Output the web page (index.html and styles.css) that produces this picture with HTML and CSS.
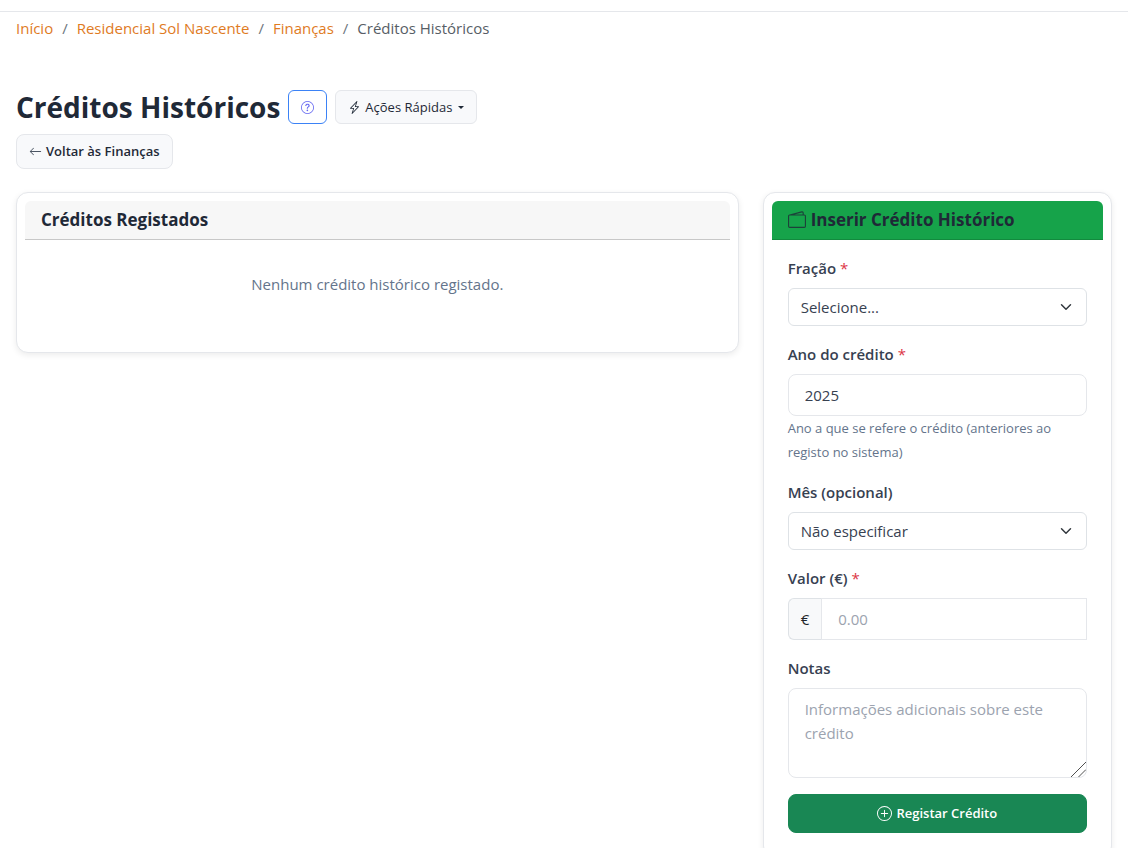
FILE: index.html
```html
<!DOCTYPE html>
<html lang="pt">
<head>
    <meta charset="UTF-8">
    <meta name="viewport" content="width=device-width, initial-scale=1.0">
    <title>Créditos Históricos</title>
    <link rel="stylesheet" href="styles.css">
</head>
<body>
    <header class="topbar"></header>

    <main class="container">
        <nav aria-label="breadcrumb">
            <ol class="breadcrumb">
                <li><a href="#">Início</a></li>
                <li><a href="#">Residencial Sol Nascente</a></li>
                <li><a href="#">Finanças</a></li>
                <li aria-current="page">Créditos Históricos</li>
            </ol>
        </nav>

        <div class="page-header">
            <div class="page-title">
                <h1>Créditos Históricos</h1>
                <button type="button" class="btn btn-help" aria-label="Ajuda">
                    <svg class="icon" viewBox="0 0 16 16" fill="currentColor">
                        <path d="M8 15A7 7 0 1 1 8 1a7 7 0 0 1 0 14m0 1A8 8 0 1 0 8 0a8 8 0 0 0 0 16"/>
                        <path d="M5.255 5.786a.237.237 0 0 0 .241.247h.825c.138 0 .248-.113.266-.25.09-.656.54-1.134 1.342-1.134.686 0 1.314.343 1.314 1.168 0 .635-.374.927-.965 1.371-.673.489-1.206 1.06-1.168 1.987l.003.217a.25.25 0 0 0 .25.246h.811a.25.25 0 0 0 .25-.25v-.105c0-.718.273-.927 1.01-1.486.609-.463 1.244-.977 1.244-2.056 0-1.511-1.276-2.241-2.673-2.241-1.267 0-2.655.59-2.75 2.286m1.557 5.763c0 .533.425.927 1.01.927.609 0 1.028-.394 1.028-.927 0-.552-.42-.94-1.029-.94-.584 0-1.009.388-1.009.94"/>
                    </svg>
                </button>
                <button type="button" class="btn btn-light" aria-haspopup="true">
                    <svg class="icon" viewBox="0 0 16 16" fill="currentColor">
                        <path d="M11.251.068a.5.5 0 0 1 .227.58L9.677 6.5H13a.5.5 0 0 1 .364.843l-8 8.5a.5.5 0 0 1-.842-.49L6.323 9.5H3a.5.5 0 0 1-.364-.843l8-8.5a.5.5 0 0 1 .615-.09zM4.157 8.5H7a.5.5 0 0 1 .478.647L6.11 13.59l5.732-6.09H9a.5.5 0 0 1-.478-.647L9.89 2.41z"/>
                    </svg>
                    <span>Ações Rápidas</span>
                    <span class="caret"></span>
                </button>
            </div>
            <a href="#" class="btn btn-light btn-back">
                <svg class="icon" viewBox="0 0 16 16" fill="currentColor">
                    <path fill-rule="evenodd" d="M15 8a.5.5 0 0 0-.5-.5H2.707l3.147-3.146a.5.5 0 1 0-.708-.708l-4 4a.5.5 0 0 0 0 .708l4 4a.5.5 0 0 0 .708-.708L2.707 8.5H14.5A.5.5 0 0 0 15 8"/>
                </svg>
                <span>Voltar às Finanças</span>
            </a>
        </div>

        <div class="row">
            <section class="card col-list">
                <div class="card-header">
                    <h2>Créditos Registados</h2>
                </div>
                <div class="empty-state">
                    <p>Nenhum crédito histórico registado.</p>
                </div>
            </section>

            <section class="card col-form">
                <div class="card-header card-header-success">
                    <svg class="icon icon-wallet" viewBox="0 0 16 16" fill="currentColor">
                        <path d="M12.136.326A1.5 1.5 0 0 1 14 1.78V3h.5A1.5 1.5 0 0 1 16 4.5v9a1.5 1.5 0 0 1-1.5 1.5h-13A1.5 1.5 0 0 1 0 13.5v-9a1.5 1.5 0 0 1 1.432-1.499zM5.562 3H13V1.78a.5.5 0 0 0-.621-.484zM1.5 4a.5.5 0 0 0-.5.5v9a.5.5 0 0 0 .5.5h13a.5.5 0 0 0 .5-.5v-9a.5.5 0 0 0-.5-.5z"/>
                    </svg>
                    <h2>Inserir Crédito Histórico</h2>
                </div>
                <form class="card-body">
                    <div class="field">
                        <label for="fracao">Fração <span class="required">*</span></label>
                        <select id="fracao" class="form-select">
                            <option>Selecione...</option>
                        </select>
                    </div>
                    <div class="field">
                        <label for="ano">Ano do crédito <span class="required">*</span></label>
                        <input type="text" inputmode="numeric" id="ano" class="form-control" value="2025">
                        <small class="form-text">Ano a que se refere o crédito (anteriores ao registo no sistema)</small>
                    </div>
                    <div class="field">
                        <label for="mes">Mês (opcional)</label>
                        <select id="mes" class="form-select">
                            <option>Não especificar</option>
                        </select>
                    </div>
                    <div class="field">
                        <label for="valor">Valor (€) <span class="required">*</span></label>
                        <div class="input-group">
                            <span class="input-group-text">€</span>
                            <input type="text" inputmode="decimal" id="valor" class="form-control" placeholder="0.00">
                        </div>
                    </div>
                    <div class="field">
                        <label for="notas">Notas</label>
                        <textarea id="notas" class="form-control" placeholder="Informações adicionais sobre este crédito"></textarea>
                    </div>
                    <button type="submit" class="btn btn-success">
                        <svg class="icon" viewBox="0 0 16 16" fill="currentColor">
                            <path d="M8 15A7 7 0 1 1 8 1a7 7 0 0 1 0 14m0 1A8 8 0 1 0 8 0a8 8 0 0 0 0 16"/>
                            <path d="M8 4a.5.5 0 0 1 .5.5v3h3a.5.5 0 0 1 0 1h-3v3a.5.5 0 0 1-1 0v-3h-3a.5.5 0 0 1 0-1h3v-3A.5.5 0 0 1 8 4"/>
                        </svg>
                        <span>Registar Crédito</span>
                    </button>
                </form>
            </section>
        </div>
    </main>
</body>
</html>
```
FILE: styles.css
```css
* {
    margin: 0;
    padding: 0;
    box-sizing: border-box;
}

body {
    font-family: 'Segoe UI', 'Open Sans', 'Noto Sans', sans-serif;
    font-size: 15px;
    line-height: 24px;
    color: #212529;
    background: #fff;
}

.topbar {
    height: 12px;
    border-bottom: 1px solid #e5e7eb;
}

.container {
    padding: 4px 16px 24px;
}

.icon {
    width: 1em;
    height: 1em;
    flex-shrink: 0;
}

/* Breadcrumb */
.breadcrumb {
    display: flex;
    flex-wrap: wrap;
    list-style: none;
    color: #575e66;
}

.breadcrumb li + li::before {
    content: '/';
    padding: 0 9px;
    color: #6c757d;
}

.breadcrumb a {
    color: #e07b1f;
    text-decoration: none;
}

/* Page header */
.page-header {
    display: flex;
    flex-direction: column;
    align-items: flex-start;
    gap: 10px;
    margin: 50px 0 23px;
}

.page-title {
    display: flex;
    flex-wrap: wrap;
    align-items: center;
    gap: 8px;
}

h1 {
    font-size: 28px;
    line-height: 34px;
    font-weight: 700;
    color: #1f2937;
}

/* Buttons */
.btn {
    display: inline-flex;
    align-items: center;
    justify-content: center;
    gap: 4px;
    padding: 5px 12px;
    border: 1px solid #e5e7eb;
    border-radius: 6px;
    font-family: inherit;
    font-size: 13px;
    line-height: 22px;
    font-weight: 500;
    text-decoration: none;
    cursor: pointer;
}

.btn-light {
    background: #f8f9fb;
    color: #1f2937;
}

.btn-back {
    padding: 6px 12px;
    border-radius: 8px;
    line-height: 21px;
    font-weight: 600;
}

.btn-back .icon {
    color: #4b5563;
}

.btn-help {
    align-self: stretch;
    background: #fff;
    border-color: #3b82f6;
    color: #6366f1;
}

.btn-success {
    width: 100%;
    padding: 8px 12px;
    border-color: #198754;
    border-radius: 8px;
    background: #198754;
    color: #fff;
    line-height: 21px;
    font-weight: 600;
}

.btn-success .icon {
    width: 15px;
    height: 15px;
}

.caret {
    margin-left: 2px;
    border-top: 3px solid;
    border-left: 3px solid transparent;
    border-right: 3px solid transparent;
}

/* Cards */
.row {
    display: grid;
    grid-template-columns: repeat(12, 1fr);
    gap: 24px;
    align-items: start;
}

.col-list {
    grid-column: span 8;
}

.col-form {
    grid-column: span 4;
}

.card {
    padding: 8px;
    border: 1px solid #e5e7eb;
    border-radius: 12px;
    background: #fff;
    box-shadow: 0 2px 6px rgba(0, 0, 0, 0.08);
}

.card-header {
    display: flex;
    align-items: center;
    gap: 5px;
    padding: 8px 16px;
    border-bottom: 1px solid #c8c8c8;
    border-radius: 6px 6px 0 0;
    background: #f7f7f7;
}

.card-header h2 {
    font-size: 17px;
    line-height: 22px;
    font-weight: 700;
    color: #1f2937;
}

.card-header-success {
    background: #16a34a;
    border-color: #128a3e;
    color: #1f2937;
}

.icon-wallet {
    width: 18px;
    height: 18px;
    opacity: 0.8;
}

.empty-state {
    padding: 32px 16px 48px;
    text-align: center;
    color: #64748b;
}

.card-body {
    padding: 16px;
}

/* Form */
.field {
    margin-bottom: 16px;
}

label {
    display: block;
    margin-bottom: 8px;
    font-weight: 600;
    color: #374151;
}

.required {
    color: #dc3545;
    font-weight: 400;
}

.form-control,
.form-select {
    display: block;
    width: 100%;
    border: 1px solid #e5e7eb;
    border-radius: 8px;
    background: #fff;
    font-family: inherit;
    font-size: 15px;
    line-height: 24px;
    color: #374151;
}

.form-control {
    padding: 8px 16px;
}

.form-control::placeholder {
    color: #9ca3af;
}

.form-select {
    appearance: none;
    padding: 6px 36px 6px 12px;
    border-color: #dee2e6;
    border-radius: 6px;
    background: #fff url("data:image/svg+xml,%3csvg xmlns='http://www.w3.org/2000/svg' viewBox='0 0 16 16'%3e%3cpath fill='none' stroke='%23343a40' stroke-linecap='round' stroke-linejoin='round' stroke-width='2' d='m2 5 6 6 6-6'/%3e%3c/svg%3e") no-repeat right 14px center / 12px 12px;
}

.form-text {
    display: block;
    font-size: 13px;
    color: #64748b;
}

textarea.form-control {
    height: 90px;
    resize: vertical;
}

textarea.form-control::-webkit-resizer {
    background: url("data:image/svg+xml,%3csvg xmlns='http://www.w3.org/2000/svg' viewBox='0 0 16 16'%3e%3cpath fill='none' stroke='%23444' d='M0 16 16 0M8 16l8-8'/%3e%3c/svg%3e") no-repeat right bottom / 100% 100%;
}

.input-group {
    display: flex;
}

.input-group-text {
    padding: 8px 12px;
    border: 1px solid #dee2e6;
    border-right: 0;
    border-radius: 6px 0 0 6px;
    background: #f8f9fa;
}

.input-group .form-control {
    flex: 1;
    min-width: 0;
    border-radius: 0;
}

@media (max-width: 768px) {
    .col-list,
    .col-form {
        grid-column: span 12;
    }
}
```
